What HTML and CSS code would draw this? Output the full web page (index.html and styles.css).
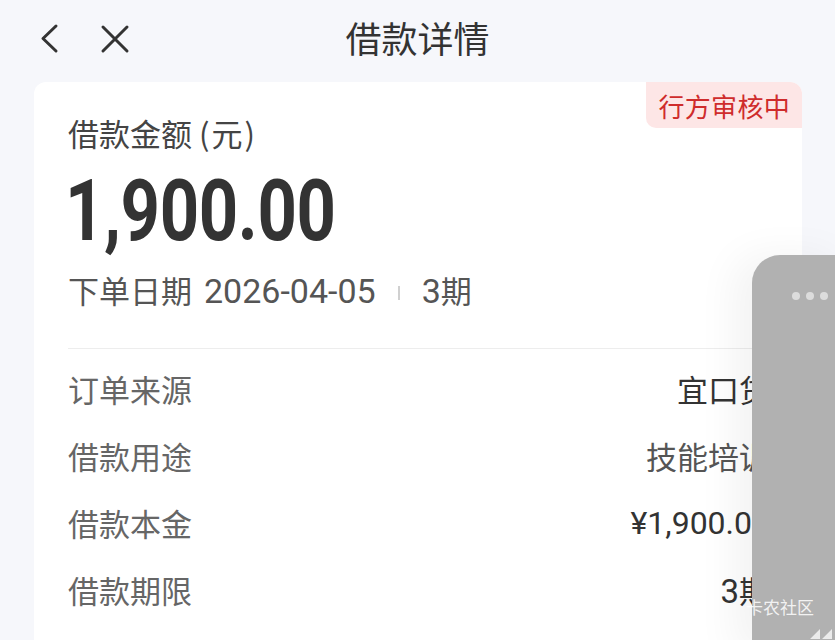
FILE: index.html
```html
<!DOCTYPE html>
<html lang="zh-CN">
<head>
<meta charset="utf-8">
<title>借款详情</title>
<link rel="stylesheet" href="styles.css">
</head>
<body>
<header class="topbar">
  <div class="nav-icons">
    <svg class="icon-back" width="20" height="32" viewBox="0 0 20 32"><polyline points="16,3 3,15.5 16,28" fill="none" stroke="#333" stroke-width="3" stroke-linecap="round" stroke-linejoin="round"/></svg>
    <svg class="icon-close" width="30" height="30" viewBox="0 0 30 30"><path d="M3 3 L27 27 M27 3 L3 27" fill="none" stroke="#333" stroke-width="3" stroke-linecap="round"/></svg>
  </div>
  <h1 class="title">借款详情</h1>
  <div></div>
</header>

<main class="card">
  <span class="badge">行方审核中</span>
  <section class="summary">
    <div class="amount-label">借款金额 <span class="paren">(元)</span></div>
    <div class="amount">1,900.00</div>
    <div class="meta"><span class="cjk">下单日期</span><span class="num date">2026-04-05</span><i class="sep"></i><span class="num">3</span><span class="cjk">期</span></div>
  </section>
  <ul class="rows">
    <li class="row"><span class="k">订单来源</span><span class="v dark">宜口贷</span></li>
    <li class="row"><span class="k">借款用途</span><span class="v">技能培训</span></li>
    <li class="row"><span class="k">借款本金</span><span class="v dark num">¥1,900.00</span></li>
    <li class="row"><span class="k">借款期限</span><span class="v dark"><span class="num">3</span>期</span></li>
  </ul>
</main>

<aside class="float-panel">
  <div class="dots"><b></b><b></b><b></b></div>
  <svg class="panel-icon" width="26" height="14" viewBox="0 0 26 14"><path d="M12 2 L2 12 L12 12 Z M24 2 L14 12 L24 12 Z" fill="rgba(255,255,255,0.75)"/></svg>
</aside>
<div class="watermark">卡农社区</div>
</body>
</html>
```

FILE: styles.css
```css
* { box-sizing: border-box; }
html, body { margin: 0; padding: 0; }
body {
  background: #f6f7fb;
  font-family: Roboto, "Noto Sans CJK SC", "Noto Sans", sans-serif;
  color: #333;
  width: 835px;
  height: 640px;
  overflow: hidden;
  position: relative;
}
.topbar {
  height: 76px;
  display: grid;
  grid-template-columns: 1fr auto 1fr;
  align-items: center;
}
.nav-icons {
  display: flex;
  align-items: center;
  gap: 40px;
  padding-left: 40px;
  padding-top: 2px;
}
.title {
  margin: 0;
  font-family: "Noto Sans CJK SC", sans-serif;
  font-weight: 400;
  font-size: 36px;
  line-height: 1;
  color: #333;
  padding-bottom: 2px;
}
.card {
  position: relative;
  margin: 6px 33px 0 34px;
  background: #fff;
  border-radius: 12px;
  height: 600px;
  padding: 30px 32px 0 34px;
}
.badge {
  position: absolute;
  top: 0;
  right: 0;
  height: 46px;
  padding: 0 12px 0 12px;
  display: flex;
  align-items: center;
  background: #fde6e6;
  color: #cf2c2c;
  font-family: "Noto Sans CJK SC", sans-serif;
  font-size: 26px;
  border-radius: 0 12px 0 10px;
  letter-spacing: 0.3px;
}
.summary {
  border-bottom: 1px solid #ededed;
  padding-bottom: 36px;
}
.amount-label {
  font-family: "Noto Sans CJK SC", sans-serif;
  font-size: 31px;
  line-height: 42px;
  color: #444;
}
.paren { letter-spacing: 2px; }
.amount {
  margin-top: 14px;
  font-family: Roboto, sans-serif;
  font-weight: 700;
  font-size: 86px;
  line-height: 86px;
  color: #333;
  transform: scaleX(0.8);
  transform-origin: left center;
  letter-spacing: -0.5px;
  margin-left: -3px;
}
.meta {
  margin-top: 15px;
  display: flex;
  align-items: baseline;
  line-height: 42px;
  color: #555;
}
.cjk {
  font-family: "Noto Sans CJK SC", sans-serif;
  font-size: 31px;
}
.num {
  font-family: Roboto, sans-serif;
  font-size: 34px;
}
.date { margin-left: 12px; }
.sep {
  align-self: center;
  display: inline-block;
  width: 2px;
  height: 14px;
  background: #d0d0d0;
  margin: 4px 22px 0 22px;
}
.rows {
  list-style: none;
  margin: 0;
  padding: 6px 0 0;
}
.row {
  height: 67px;
  display: flex;
  align-items: center;
  justify-content: space-between;
  font-size: 31px;
  font-family: "Noto Sans CJK SC", sans-serif;
}
.row .k { color: #666; }
.row .v { color: #555; font-family: "Noto Sans CJK SC", sans-serif; }
.row .v.num { font-family: Roboto, sans-serif; font-size: 32px; }
.row .v .num { font-size: 33px; }
.row .v.dark { color: #333; }
.float-panel {
  position: absolute;
  left: 752px;
  top: 255px;
  width: 100px;
  height: 400px;
  background: #b1b1b1;
  border-top-left-radius: 28px;
  box-shadow: -18px 0 40px rgba(0, 0, 0, 0.05);
}
.dots {
  display: flex;
  gap: 6px;
  padding: 37px 0 0 40px;
}
.dots b {
  width: 8px;
  height: 8px;
  border-radius: 50%;
  background: #dcdcdc;
}
.panel-icon {
  position: absolute;
  left: 56px;
  top: 372px;
}
.watermark {
  position: absolute;
  left: 746px;
  top: 596px;
  font-family: "Noto Sans CJK SC", sans-serif;
  font-size: 17px;
  color: rgba(255, 255, 255, 0.85);
  line-height: 22px;
}
```
